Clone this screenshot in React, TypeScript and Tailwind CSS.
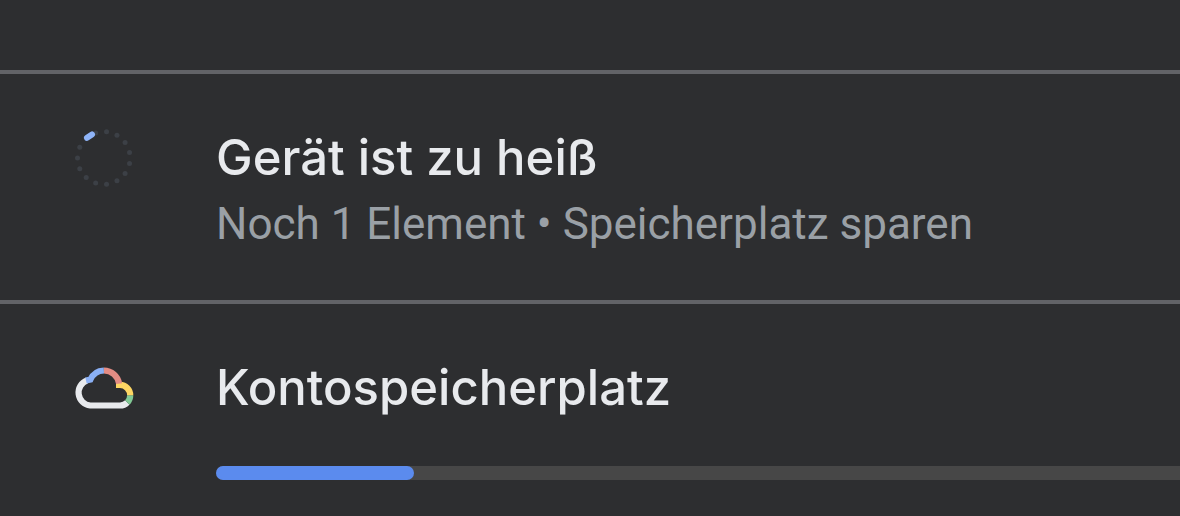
import React from 'react';

const DOTS = Array.from({ length: 15 }, (_, i) => {
  const angle = ((6 + i * 24) * Math.PI) / 180;
  return { x: 29.8 + 26.3 * Math.sin(angle), y: 30 - 26.3 * Math.cos(angle) };
});

const BackupSpinner: React.FC = () => (
  <svg viewBox="0 0 60 60" className="w-[60px] h-[60px]" aria-hidden="true">
    {DOTS.map((dot, i) => (
      <circle key={i} cx={dot.x} cy={dot.y} r="2.5" fill="#3c4046" />
    ))}
    <path d="M13 9.8 L18 6.5" stroke="#8fb4f8" strokeWidth="6" strokeLinecap="round" />
  </svg>
);

const CloudIcon: React.FC = () => (
  <svg viewBox="0 0 60 44" className="w-[60px] h-11" fill="none" strokeWidth="6.2" aria-hidden="true">
    <path d="M13 14.4 A13 13 0 0 0 16.2 39.5 H46 A10.3 10.3 0 0 0 53.3 36.5" stroke="#e8eaed" />
    <path d="M53.3 36.5 A10.3 10.3 0 0 0 56.2 29.2" stroke="#81c995" />
    <path d="M56.2 29.2 A10.3 10.3 0 0 0 46 18.9 L42 18.9" stroke="#fdd663" />
    <path d="M45.1 17.6 A15.4 15.4 0 0 0 29.9 4.5" stroke="#e38c84" />
    <path d="M29.9 4.5 A15.4 15.4 0 0 0 16.4 13.6 L12 14.6" stroke="#8ab0f5" />
  </svg>
);

interface MenuRowProps {
  icon: React.ReactNode;
  title: string;
  children?: React.ReactNode;
}

const MenuRow: React.FC<MenuRowProps> = ({ icon, title, children }) => (
  <section className="flex items-start border-t-4 border-[#626367] pt-[54px] pl-[74px]">
    <div className="w-[142px] h-[60px] shrink-0 flex items-center">{icon}</div>
    <div className="flex-1 min-w-0">
      <h2 className="font-['Inter','Liberation_Sans',sans-serif] font-medium text-[49px] leading-[60px] text-[#e8eaed]">
        {title}
      </h2>
      {children}
    </div>
  </section>
);

const App: React.FC = () => {
  const used = 20.5;

  return (
    <main className="min-h-screen bg-[#2d2e30] pt-[70px] overflow-hidden">
      <MenuRow icon={<BackupSpinner />} title="Gerät ist zu heiß">
        <p className="mt-2 mb-12 font-['Roboto','Liberation_Sans',sans-serif] text-[44px] leading-[56px] text-[#9aa0a6]">
          Noch 1 Element • Speicherplatz sparen
        </p>
      </MenuRow>

      <MenuRow icon={<CloudIcon />} title="Kontospeicherplatz">
        <div
          role="progressbar"
          aria-label="Kontospeicherplatz"
          aria-valuenow={used}
          aria-valuemin={0}
          aria-valuemax={100}
          className="mt-12 h-[14px] rounded-l-full bg-[#474747]"
        >
          <div className="h-full rounded-full bg-[#5b8bee]" style={{ width: `${used}%` }} />
        </div>
      </MenuRow>
    </main>
  );
};

export default App;
